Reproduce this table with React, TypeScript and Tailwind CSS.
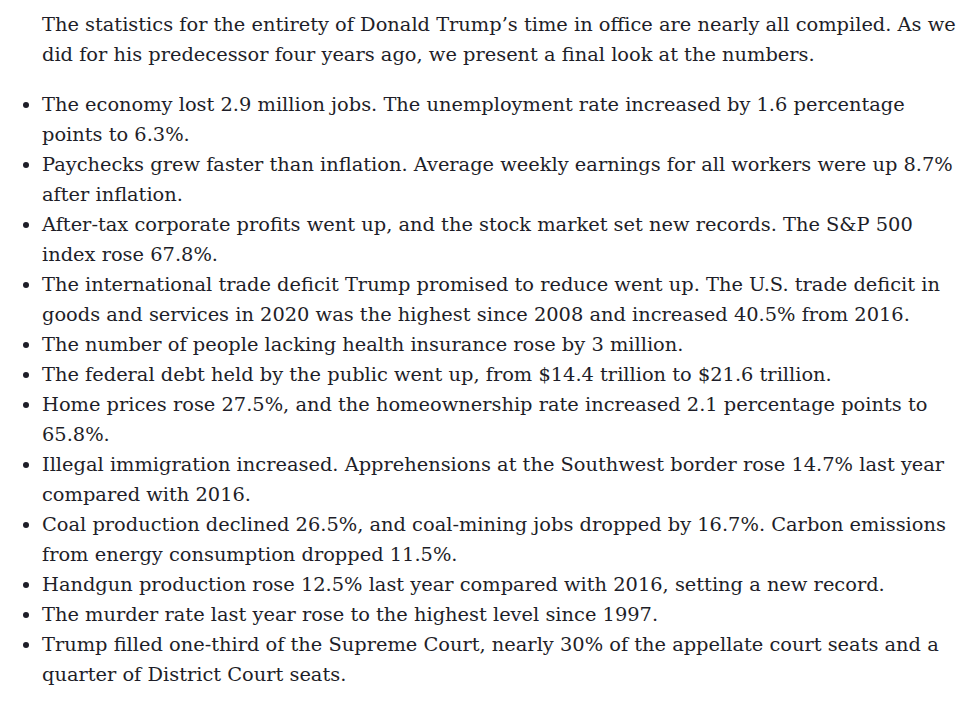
const ITEMS = [
  "The economy lost 2.9 million jobs. The unemployment rate increased by 1.6 percentage points to 6.3%.",
  "Paychecks grew faster than inflation. Average weekly earnings for all workers were up 8.7% after inflation.",
  "After-tax corporate profits went up, and the stock market set new records. The S&P 500 index rose 67.8%.",
  "The international trade deficit Trump promised to reduce went up. The U.S. trade deficit in goods and services in 2020 was the highest since 2008 and increased 40.5% from 2016.",
  "The number of people lacking health insurance rose by 3 million.",
  "The federal debt held by the public went up, from $14.4 trillion to $21.6 trillion.",
  "Home prices rose 27.5%, and the homeownership rate increased 2.1 percentage points to 65.8%.",
  "Illegal immigration increased. Apprehensions at the Southwest border rose 14.7% last year compared with 2016.",
  "Coal production declined 26.5%, and coal-mining jobs dropped by 16.7%. Carbon emissions from energy consumption dropped 11.5%.",
  "Handgun production rose 12.5% last year compared with 2016, setting a new record.",
  "The murder rate last year rose to the highest level since 1997.",
  "Trump filled one-third of the Supreme Court, nearly 30% of the appellate court seats and a quarter of District Court seats.",
];

export default function App() {
  return (
    <div className="min-h-screen bg-white pt-[10px] font-['DejaVu_Serif',serif] text-[19.4px] leading-[30px] text-[#1e1e28]">
      <div className="w-[957px]">
        <p className="pl-[42px]">
          The statistics for the entirety of Donald Trump’s time in office are nearly all compiled. As we did for his
          predecessor four years ago, we present a final look at the numbers.
        </p>
        <ul className="mt-[20px] list-disc pl-[42px]">
          {ITEMS.map((item) => (
            <li key={item}>{item}</li>
          ))}
        </ul>
      </div>
    </div>
  );
}
